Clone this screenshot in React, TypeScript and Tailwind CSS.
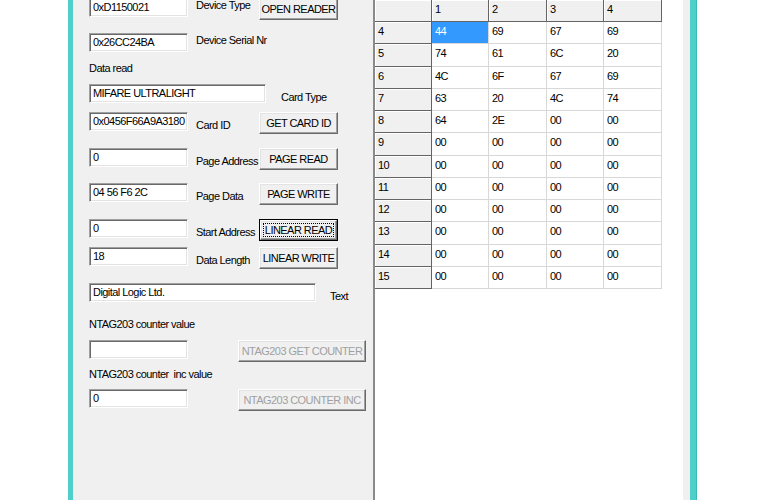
import React from 'react';

const rows: string[][] = [
  ['4', '44', '69', '67', '69'],
  ['5', '74', '61', '6C', '20'],
  ['6', '4C', '6F', '67', '69'],
  ['7', '63', '20', '4C', '74'],
  ['8', '64', '2E', '00', '00'],
  ['9', '00', '00', '00', '00'],
  ['10', '00', '00', '00', '00'],
  ['11', '00', '00', '00', '00'],
  ['12', '00', '00', '00', '00'],
  ['13', '00', '00', '00', '00'],
  ['14', '00', '00', '00', '00'],
  ['15', '00', '00', '00', '00'],
];

type BoxProps = { value: string; w: string };

const TextBox: React.FC<BoxProps> = ({ value, w }) => (
  <div
    className={`${w} h-[19px] shrink-0 bg-white border border-t-[#a0a0a0] border-l-[#a0a0a0] border-r-white border-b-white shadow-[inset_1px_1px_0_#696969,inset_-1px_-1px_0_#e3e3e3] pl-[3px] pt-[1px] leading-[15px] whitespace-nowrap overflow-hidden`}
  >
    {value}
  </div>
);

type BtnProps = { label: string; w: string; disabled?: boolean; focused?: boolean };

const Button: React.FC<BtnProps> = ({ label, w, disabled, focused }) => (
  <div className={`${w} h-[22px] shrink-0 flex ${focused ? 'border border-black' : ''}`}>
    <div
      className={`flex-1 flex items-center justify-center whitespace-nowrap bg-[#f0f0f0] border border-t-white border-l-white border-r-[#696969] border-b-[#696969] shadow-[inset_-1px_-1px_0_#a0a0a0,inset_1px_1px_0_#e3e3e3] ${disabled ? 'text-[#a0a0a0]' : 'text-black'}`}
    >
      {focused ? (
        <div className="flex-1 self-stretch m-[2px] border border-dotted border-black flex items-center justify-center leading-[13px]">
          {label}
        </div>
      ) : (
        <span className="leading-[13px]">{label}</span>
      )}
    </div>
  </div>
);

const Label: React.FC<{ text: string; cls: string }> = ({ text, cls }) => (
  <div className={`${cls} leading-[13px] whitespace-nowrap`}>{text}</div>
);

export default function App() {
  return (
    <div className="w-[768px] h-[500px] overflow-hidden bg-white flex font-['Liberation_Sans',Arial,sans-serif] text-[11px] tracking-[-0.55px] text-black">
      <div className="w-[68px] shrink-0" />
      <div className="w-[5px] shrink-0 bg-[#4fcfca]" />

      {/* left form */}
      <div className="w-[300px] shrink-0 bg-[#f0f0f0] pl-[16px] flex flex-col">
        <div className="mt-[-2px] h-[22px] flex items-start">
          <TextBox value="0xD1150021" w="w-[99px]" />
          <Label text="Device Type" cls="ml-[8px] mt-[0.5px] w-[63px]" />
          <Button label="OPEN READER" w="w-[79px]" />
        </div>
        <div className="mt-[13px] h-[22px] flex items-start">
          <TextBox value="0x26CC24BA" w="w-[99px]" />
          <Label text="Device Serial Nr" cls="ml-[8px] mt-[0.5px]" />
        </div>
        <Label text="Data read" cls="mt-[6.5px]" />
        <div className="mt-[9.5px] h-[22px] flex items-start">
          <TextBox value="MIFARE ULTRALIGHT" w="w-[177px]" />
          <Label text="Card Type" cls="ml-[15px] mt-[6.5px]" />
        </div>
        <div className="mt-[6px] h-[22px] flex items-start">
          <TextBox value="0x0456F66A9A3180" w="w-[99px]" />
          <Label text="Card ID" cls="ml-[8px] mt-[6.5px] w-[63px]" />
          <Button label="GET CARD ID" w="w-[79px]" />
        </div>
        <div className="mt-[14px] h-[22px] flex items-start">
          <TextBox value="0" w="w-[99px]" />
          <Label text="Page Address" cls="ml-[8px] mt-[6.5px] w-[63px]" />
          <Button label="PAGE READ" w="w-[79px]" />
        </div>
        <div className="mt-[13px] h-[22px] flex items-start">
          <TextBox value="04 56 F6 2C" w="w-[99px]" />
          <Label text="Page Data" cls="ml-[8px] mt-[6.5px] w-[63px]" />
          <Button label="PAGE WRITE" w="w-[79px]" />
        </div>
        <div className="mt-[14px] h-[22px] flex items-start">
          <TextBox value="0" w="w-[99px]" />
          <Label text="Start Address" cls="ml-[8px] mt-[6.5px] w-[63px]" />
          <Button label="LINEAR READ" w="w-[79px]" focused />
        </div>
        <div className="mt-[6px] h-[22px] flex items-start">
          <TextBox value="18" w="w-[99px]" />
          <Label text="Data Length" cls="ml-[8px] mt-[6.5px] w-[63px]" />
          <Button label="LINEAR WRITE" w="w-[79px]" />
        </div>
        <div className="mt-[14px] h-[22px] flex items-start">
          <TextBox value="Digital Logic Ltd." w="w-[227px]" />
          <Label text="Text" cls="ml-[14px] mt-[6.5px]" />
        </div>
        <Label text="NTAG203 counter value" cls="mt-[12.5px]" />
        <div className="mt-[9.5px] h-[22px] flex items-start">
          <TextBox value="" w="w-[99px]" />
          <Button label="NTAG203 GET COUNTER" w="w-[128px] ml-[50px]" disabled />
        </div>
        <Label text="NTAG203 counter  inc value" cls="mt-[5.5px] whitespace-pre" />
        <div className="mt-[8.5px] h-[22px] flex items-start">
          <TextBox value="0" w="w-[99px]" />
          <Button label="NTAG203 COUNTER INC" w="w-[128px] ml-[50px]" disabled />
        </div>
      </div>

      {/* data grid */}
      <div className="w-[310px] shrink-0 bg-white border-l-2 border-l-[#8a8a8a] flex flex-col">
        <div className="grid grid-cols-[57px_57px_58px_57px_58px] w-[287px]">
          {['', '1', '2', '3', '4'].map((h, i) => (
            <div
              key={'h' + i}
              className="h-[22px] bg-[#f0f0f0] border-r border-b border-[#646464] shadow-[inset_1px_1px_0_#ffffff] pl-[3px] pt-[3px] leading-[13px]"
            >
              {h}
            </div>
          ))}
          {rows.map((r, ri) =>
            r.map((c, ci) =>
              ci === 0 ? (
                <div
                  key={ri + '-' + ci}
                  className="h-[22.25px] bg-[#f0f0f0] border-r border-b border-[#646464] shadow-[inset_1px_1px_0_#ffffff] pl-[3px] pt-[3px] leading-[13px]"
                >
                  {c}
                </div>
              ) : ri === 0 && ci === 1 ? (
                <div
                  key={ri + '-' + ci}
                  className="h-[22.25px] bg-[#3399ff] text-white border-r border-b border-[#d8d8d8] pl-[3px] pt-[3px] leading-[13px]"
                >
                  {c}
                </div>
              ) : (
                <div
                  key={ri + '-' + ci}
                  className="h-[22.25px] bg-white border-r border-b border-[#d8d8d8] pl-[3px] pt-[3px] leading-[13px]"
                >
                  {c}
                </div>
              )
            )
          )}
        </div>
      </div>

      <div className="w-[7px] shrink-0 bg-[#f0f0f0]" />
      <div className="w-[7px] shrink-0 bg-[#4fcfca] border-r border-r-[#3bb9b4]" />
      <div className="flex-1" />
    </div>
  );
}
